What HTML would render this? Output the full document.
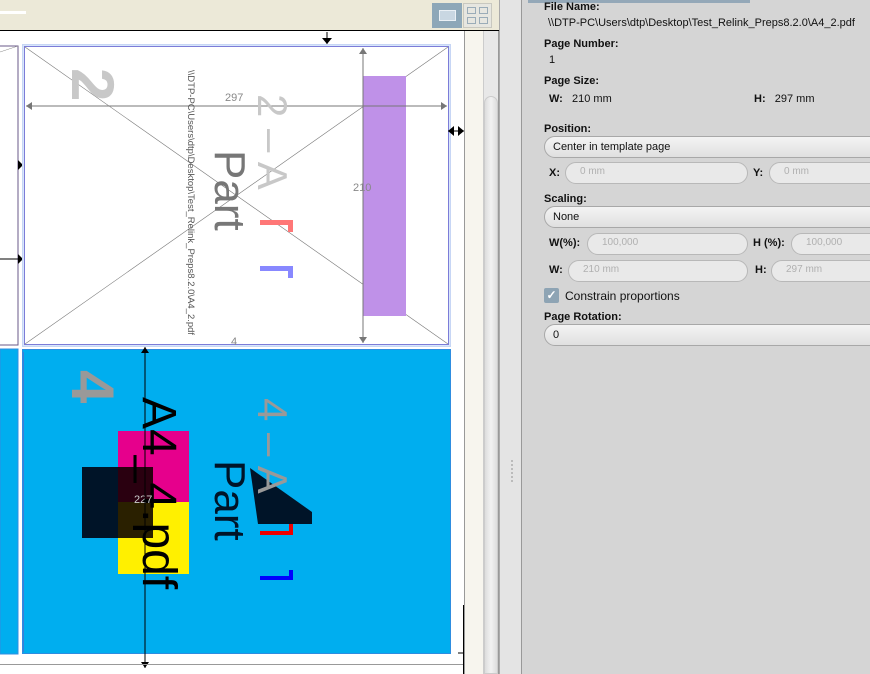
<!DOCTYPE html>
<html><head><meta charset="utf-8"><style>
*{margin:0;padding:0;box-sizing:border-box}
body{width:870px;height:674px;overflow:hidden;position:relative;background:#fff;font-family:"Liberation Sans",sans-serif}
.a{position:absolute}
.p{font-size:11px;color:#111}
.b{font-weight:bold}
.dd{position:absolute;left:544px;width:340px;height:22px;border:1px solid #a8a8a8;border-radius:11px;background:linear-gradient(#f4f4f4,#e0e0e0);font-size:11px;padding:4px 0 0 8px;color:#111}
.in{position:absolute;height:22px;border:1px solid #b8b8b8;border-radius:11px;background:#e9e9e9;font-size:10px;color:#b0b0b0;padding:3px 0 0 14px}
</style></head><body>
<!-- right of canvas -->
<div class="a" style="left:464px;top:31px;width:19px;height:643px;background:#f7f5ee;border-left:1px solid #999"></div>
<div class="a" style="left:483px;top:31px;width:16px;height:643px;background:#e8e8e8;border-left:1px solid #ccc;border-right:1px solid #999"></div>
<div class="a" style="left:484px;top:96px;width:14px;height:578px;background:linear-gradient(90deg,#ddd,#f2f2f2,#ddd);border-radius:7px 7px 0 0;border:1px solid #ccc"></div>
<!-- top bar -->
<div class="a" style="left:0;top:0;width:499px;height:31px;background:#ece9d8;border-bottom:1px solid #000"></div>
<div class="a" style="left:0;top:11px;width:26px;height:3px;background:#fff"></div>
<div class="a" style="left:432px;top:3px;width:30px;height:25px;background:#8da7b8"></div>
<div class="a" style="left:439px;top:10px;width:17px;height:11px;background:#c9d7e2;border:1px solid #eaf0f5"></div>
<div class="a" style="left:463px;top:3px;width:29px;height:25px;background:#e6e6e0;border:1px solid #c8c8c0"></div>
<div class="a" style="left:467px;top:7px;width:9px;height:7px;border:1px solid #9aacb8"></div>
<div class="a" style="left:479px;top:7px;width:9px;height:7px;border:1px solid #9aacb8"></div>
<div class="a" style="left:467px;top:17px;width:9px;height:7px;border:1px solid #9aacb8"></div>
<div class="a" style="left:479px;top:17px;width:9px;height:7px;border:1px solid #9aacb8"></div>
<div class="a" style="left:499px;top:0;width:23px;height:674px;background:#e4e4e4;border-left:1px solid #aaa;border-right:1px solid #999"></div>
<div class="a" style="left:511px;top:460px;width:2px;height:22px;border-left:2px dotted #bbb"></div>
<!-- panel -->
<div class="a" style="left:522px;top:0;width:348px;height:674px;background:#d5d5d5"></div>
<div class="a" style="left:528px;top:0;width:222px;height:3px;background:#94a8b8"></div>
<svg class="a" style="left:0;top:32px" width="464" height="642" viewBox="0 32 464 642">
<rect x="0" y="32" width="464" height="642" fill="#fff"/>
<rect x="-2" y="46" width="20" height="299" fill="#fff" stroke="#6a5a8a"/>
<line x1="0" y1="52" x2="18" y2="46" stroke="#888" stroke-width=".5"/>
<line x1="0" y1="259" x2="20" y2="259" stroke="#000"/>
<path d="M18 254 L23 259 L18 264Z M18 160 L23 165 L18 170Z" fill="#000"/>
<rect x="22.5" y="44.5" width="428" height="302" fill="#d8e6fb" stroke="#c7d6f5"/>
<rect x="24.5" y="46.5" width="424" height="298" fill="#fff" stroke="#7c7cd8"/>
<line x1="25" y1="47" x2="448" y2="344" stroke="#777" stroke-width=".6"/>
<line x1="448" y1="47" x2="25" y2="344" stroke="#777" stroke-width=".6"/>
<rect x="363" y="76" width="43" height="240" fill="#bf91e8"/>
<line x1="26" y1="106" x2="447" y2="106" stroke="#777"/>
<path d="M26 106 l6 -4 v8Z M447 106 l-6 -4 v8Z" fill="#777"/>
<line x1="363" y1="48" x2="363" y2="343" stroke="#777"/>
<path d="M363 48 l-4 6 h8Z M363 343 l-4 -6 h8Z" fill="#777"/>
<text x="225" y="101" font-size="11" fill="#888" font-family="Liberation Sans">297</text>
<text x="353" y="191" font-size="11" fill="#888" font-family="Liberation Sans">210</text>
<text x="231" y="345" font-size="11" fill="#888" font-family="Liberation Sans">4</text>
<text transform="translate(72,68) rotate(90)" font-size="60" fill="#c8c8c8" font-weight="bold" font-family="Liberation Sans">2</text>
<text transform="translate(215,150) rotate(90)" font-size="44" fill="#777" font-family="Liberation Sans">Part</text>
<text transform="translate(258,94) rotate(90)" font-size="42" fill="#c8c8c8" font-family="Liberation Sans">2 – A</text>
<rect x="260" y="220" width="33" height="5" fill="#f77"/><rect x="288" y="220" width="5" height="12" fill="#f77"/>
<rect x="260" y="266" width="33" height="5" fill="#88f"/><rect x="288" y="266" width="5" height="12" fill="#88f"/>
<text transform="translate(188,70) rotate(90)" font-size="9.5" fill="#555" font-family="Liberation Sans">\\DTP-PC\Users\dtp\Desktop\Test_Relink_Preps8.2.0\A4_2.pdf</text>
<line x1="327" y1="32" x2="327" y2="44" stroke="#000"/>
<path d="M322 38 h10 l-5 6Z" fill="#000"/>
<line x1="448" y1="131" x2="464" y2="131" stroke="#000"/>
<path d="M448 131 l6 -5 v10Z M464 131 l-6 -5 v10Z" fill="#000"/>
<rect x="0" y="349" width="18" height="305" fill="#00aeef" stroke="#2f8fe0"/>
<rect x="22.5" y="349.5" width="428" height="304" fill="#00aeef" stroke="#2e8de0"/>
<line x1="23.5" y1="352" x2="23.5" y2="652" stroke="#3a7fd8"/>
<text transform="translate(72,370) rotate(90)" font-size="60" fill="#999" font-weight="bold" font-family="Liberation Sans">4</text>
<rect x="118" y="431" width="71" height="71" fill="#e6008c"/>
<rect x="118" y="502" width="71" height="72" fill="#fff000"/>
<rect x="82" y="467" width="71" height="71" fill="#001428"/>
<rect x="118" y="467" width="35" height="35" fill="#2a0010"/>
<rect x="118" y="502" width="35" height="36" fill="#2a2000"/>
<text transform="translate(143,397) rotate(90)" font-size="48" fill="#000" font-family="Liberation Sans">A4_4.pdf</text>
<path d="M250 468 L312 512 L312 524 L258 524Z" fill="#001428"/>
<text transform="translate(215,460) rotate(90)" font-size="44" fill="#001428" font-family="Liberation Sans">Part</text>
<text transform="translate(258,398) rotate(90)" font-size="42" fill="#999" font-family="Liberation Sans">4 – A</text>
<rect x="260" y="531" width="33" height="4" fill="#e00"/><rect x="289" y="524" width="4" height="11" fill="#e00"/>
<rect x="260" y="576" width="33" height="4" fill="#00f"/><rect x="289" y="570" width="4" height="10" fill="#00f"/>
<text x="134" y="503" font-size="11" fill="#ccc" font-family="Liberation Sans">227</text>
<line x1="145" y1="347" x2="145" y2="668" stroke="#000"/>
<path d="M145 347 l-4 6 h8Z M145 668 l-4 -6 h8Z" fill="#000"/>
<line x1="0" y1="664.5" x2="464" y2="664.5" stroke="#999"/>
<line x1="463.5" y1="605" x2="463.5" y2="674" stroke="#000"/>
<line x1="458" y1="653" x2="470" y2="653" stroke="#000"/>
</svg>
<div class="a p b" style="left:544px;top:1px">File Name:</div>
<div class="a p" style="left:548px;top:17px">\\DTP-PC\Users\dtp\Desktop\Test_Relink_Preps8.2.0\A4_2.pdf</div>
<div class="a p b" style="left:544px;top:38px">Page Number:</div>
<div class="a p" style="left:549px;top:54px">1</div>
<div class="a p b" style="left:544px;top:75px">Page Size:</div>
<div class="a p" style="left:549px;top:93px"><b>W:</b>&nbsp;&nbsp; 210 mm</div>
<div class="a p" style="left:754px;top:93px"><b>H:</b>&nbsp;&nbsp; 297 mm</div>
<div class="a p b" style="left:544px;top:123px">Position:</div>
<div class="dd" style="top:136px">Center in template page</div>
<div class="a p b" style="left:549px;top:167px">X:</div>
<div class="in" style="left:565px;top:162px;width:183px">0 mm</div>
<div class="a p b" style="left:753px;top:167px">Y:</div>
<div class="in" style="left:769px;top:162px;width:120px">0 mm</div>
<div class="a p b" style="left:544px;top:193px">Scaling:</div>
<div class="dd" style="top:206px">None</div>
<div class="a p b" style="left:549px;top:237px">W(%):</div>
<div class="in" style="left:587px;top:233px;width:161px">100,000</div>
<div class="a p b" style="left:753px;top:237px">H (%):</div>
<div class="in" style="left:791px;top:233px;width:100px">100,000</div>
<div class="a p b" style="left:549px;top:264px">W:</div>
<div class="in" style="left:568px;top:260px;width:180px">210 mm</div>
<div class="a p b" style="left:755px;top:264px">H:</div>
<div class="in" style="left:771px;top:260px;width:120px">297 mm</div>
<div class="a" style="left:544px;top:288px;width:15px;height:15px;background:#8ea4b4;border-radius:2px;color:#fff;font-size:12px;line-height:15px;text-align:center;font-weight:bold">✓</div>
<div class="a p" style="left:565px;top:289px;font-size:12px">Constrain proportions</div>
<div class="a p b" style="left:544px;top:311px">Page Rotation:</div>
<div class="dd" style="top:324px">0</div>
</body></html>
